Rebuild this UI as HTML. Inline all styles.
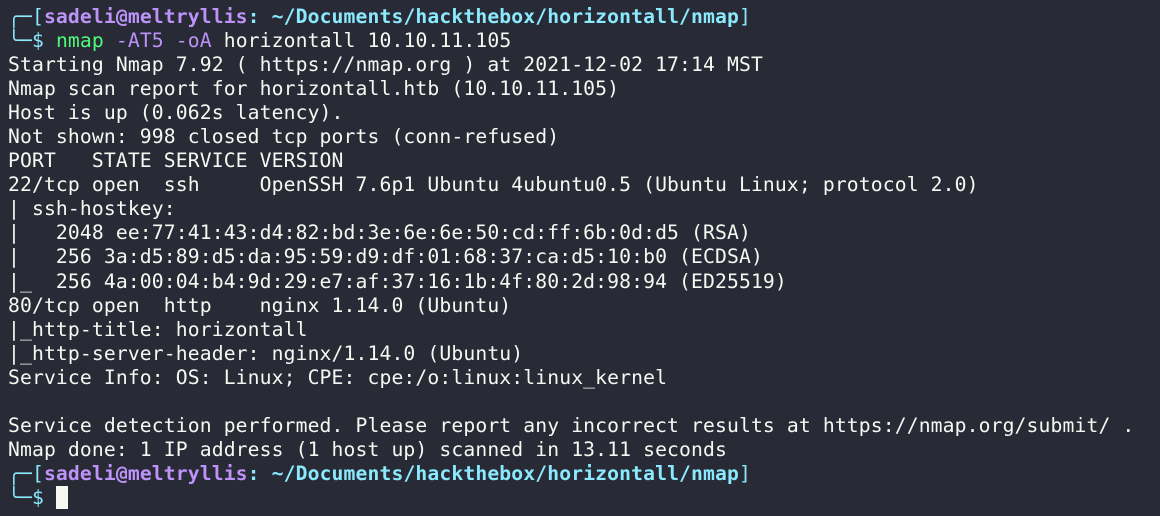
<!DOCTYPE html>
<html><head><meta charset="utf-8"><style>
html,body{margin:0;padding:0;background:#282a36;width:1160px;height:516px;overflow:hidden}
pre{margin:0;position:absolute;left:8px;top:5px;font-family:"DejaVu Sans Mono","Liberation Mono",monospace;font-size:19.7px;letter-spacing:0.13px;line-height:24.05px;color:#f8f8f2;white-space:pre}
.c{color:#8be9fd}.p{color:#bd93f9;font-weight:bold}.b{color:#8be9fd;font-weight:bold}.g{color:#50fa7b}
.cur{display:inline-block;width:12px;height:23px;background:#f8f8f2;vertical-align:-5px}
</style></head><body>
<pre><span class="c">╭─[</span><span class="p">sadeli@meltryllis</span><span class="b">: ~/Documents/hackthebox/horizontall/nmap</span><span class="c">]</span>
<span class="c">╰─$</span> <span class="g">nmap</span> <span class="p" style="font-weight:normal">-AT5 -oA</span> horizontall 10.10.11.105
Starting Nmap 7.92 ( https://nmap.org ) at 2021-12-02 17:14 MST
Nmap scan report for horizontall.htb (10.10.11.105)
Host is up (0.062s latency).
Not shown: 998 closed tcp ports (conn-refused)
PORT   STATE SERVICE VERSION
22/tcp open  ssh     OpenSSH 7.6p1 Ubuntu 4ubuntu0.5 (Ubuntu Linux; protocol 2.0)
| ssh-hostkey:
|   2048 ee:77:41:43:d4:82:bd:3e:6e:6e:50:cd:ff:6b:0d:d5 (RSA)
|   256 3a:d5:89:d5:da:95:59:d9:df:01:68:37:ca:d5:10:b0 (ECDSA)
|_  256 4a:00:04:b4:9d:29:e7:af:37:16:1b:4f:80:2d:98:94 (ED25519)
80/tcp open  http    nginx 1.14.0 (Ubuntu)
|_http-title: horizontall
|_http-server-header: nginx/1.14.0 (Ubuntu)
Service Info: OS: Linux; CPE: cpe:/o:linux:linux_kernel

Service detection performed. Please report any incorrect results at https://nmap.org/submit/ .
Nmap done: 1 IP address (1 host up) scanned in 13.11 seconds
<span class="c">╭─[</span><span class="p">sadeli@meltryllis</span><span class="b">: ~/Documents/hackthebox/horizontall/nmap</span><span class="c">]</span>
<span class="c">╰─$</span> <span class="cur"></span></pre>
</body></html>
